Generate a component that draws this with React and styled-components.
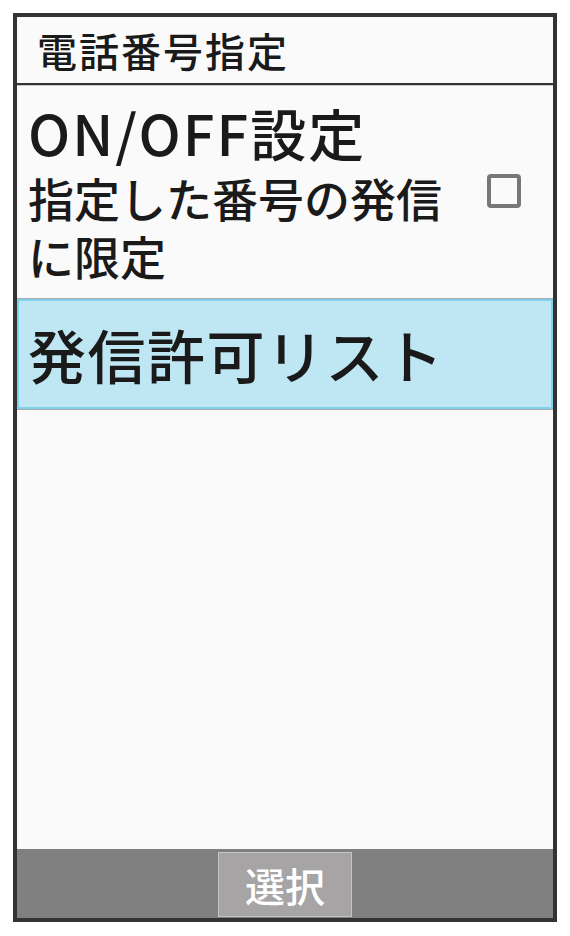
import styled, {createGlobalStyle} from 'styled-components'

const Global = createGlobalStyle`
    body {
        margin: 0;
        background: #ffffff;
        font-family: "Noto Sans CJK JP", "Noto Sans", sans-serif;
        font-weight: 500;
    }
`

const Frame = styled.div`
    margin: 13px;
    width: 536px;
    height: 901px;
    border: 4px solid #333333;
    background: #fafafa;
    display: flex;
    flex-direction: column;
`

const Header = styled.div`
    height: 66px;
    border-bottom: 2px solid #333333;
    box-shadow: 0 1px 0 #c8c8c8;
    display: flex;
    align-items: center;
    padding-left: 20px;
    font-size: 40px;
    letter-spacing: 2px;
    color: #1a1a1a;
`

const SettingRow = styled.div`
    height: 212px;
    margin-top: 2px;
    display: flex;
    align-items: flex-start;
    padding: 12px 32px 0 11px;
    box-sizing: border-box;
    border-bottom: 1px solid #aaaaaa;
`

const TextCol = styled.div`
    flex: 1;
    color: #1a1a1a;
`

const Title = styled.div`
    font-size: 56px;
    line-height: 66px;
    letter-spacing: 2px;
`

const Sub = styled.div`
    font-size: 46px;
    line-height: 58px;
    margin-top: 3px;
`

const Check = styled.div`
    width: 26px;
    height: 26px;
    border: 4px solid #777777;
    border-radius: 4px;
    margin-top: 75px;
`

const ListItem = styled.div`
    height: 110px;
    box-sizing: border-box;
    display: flex;
    align-items: center;
    padding-left: 9px;
    background: ${props => props.selected ? "#bfe6f3" : "transparent"};
    border: 2px solid ${props => props.selected ? "#7fd0ea" : "transparent"};
    box-shadow: 0 1px 0 #aaaaaa;
    font-size: 58px;
    letter-spacing: 1.5px;
    color: #1a1a1a;
`

const Spacer = styled.div`
    flex: 1;
`

const Footer = styled.div`
    height: 69px;
    background: #808080;
    display: flex;
    justify-content: center;
    align-items: flex-start;
    padding-top: 3px;
    box-sizing: border-box;
`

const SoftKey = styled.div`
    width: 134px;
    height: 65px;
    box-sizing: border-box;
    background: #a6a4a4;
    border: 1px solid #c4c4c4;
    color: #ffffff;
    font-size: 40px;
    display: flex;
    align-items: center;
    justify-content: center;
`

export default function App() {
    return (
        <>
            <Global />
            <Frame>
                <Header>電話番号指定</Header>
                <SettingRow>
                    <TextCol>
                        <Title>ON/OFF設定</Title>
                        <Sub>指定した番号の発信<br />に限定</Sub>
                    </TextCol>
                    <Check />
                </SettingRow>
                <ListItem selected>発信許可リスト</ListItem>
                <Spacer />
                <Footer>
                    <SoftKey>選択</SoftKey>
                </Footer>
            </Frame>
        </>
    )
}
